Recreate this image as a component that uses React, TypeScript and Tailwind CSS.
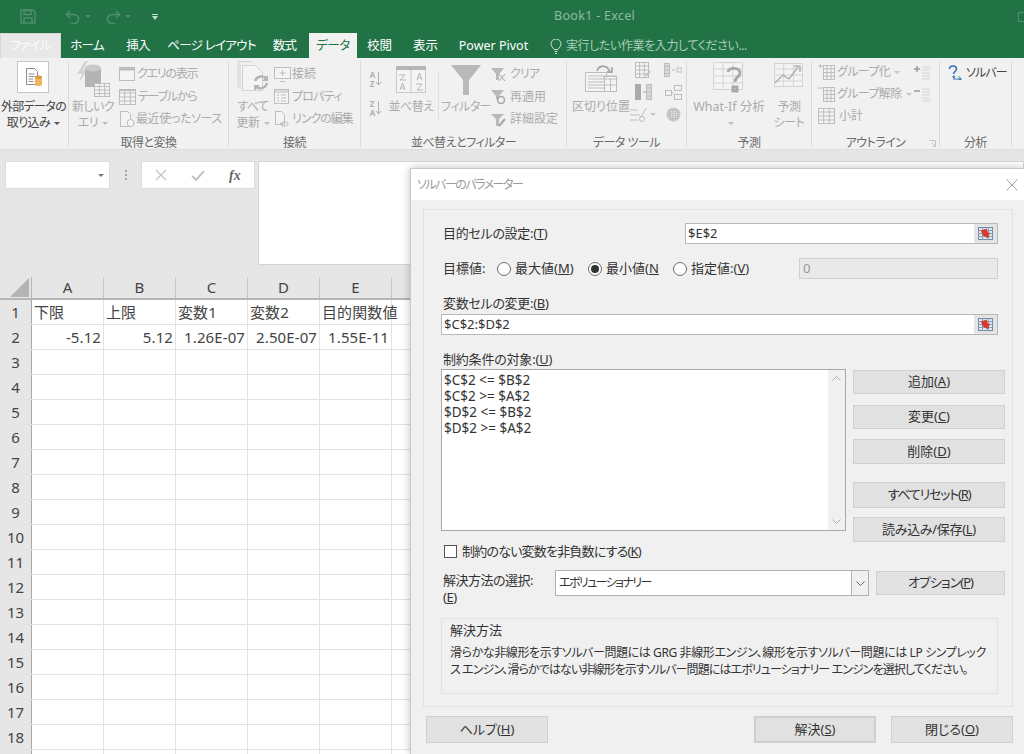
import type { ReactNode } from "react"

const G = "#bdbdbd"
const L = "#d3d3d3"

function Ico({ w, h, children, className }: { w: number; h: number; children: ReactNode; className?: string }) {
    return (
        <svg width={w} height={h} viewBox={`0 0 ${w} ${h}`} fill="none" className={className}>
            {children}
        </svg>
    )
}

function MiniTable({ x = 0, y = 0, w = 16, h = 14, c = G }: { x?: number; y?: number; w?: number; h?: number; c?: string }) {
    const cols = [w / 3, (2 * w) / 3]
    const rows = [h / 4, h / 2, (3 * h) / 4]
    return (
        <g>
            <rect x={x + 0.5} y={y + 0.5} width={w - 1} height={h - 1} fill="#f4f4f4" stroke={c} />
            {cols.map((v) => (
                <path key={v} d={`M${x + v} ${y}v${h}`} stroke={c} />
            ))}
            {rows.map((v) => (
                <path key={v} d={`M${x} ${y + v}h${w}`} stroke={c} />
            ))}
        </g>
    )
}

function Caret({ color = "#9a9a9a" }: { color?: string }) {
    return (
        <svg width="6" height="3" viewBox="0 0 6 3" className="inline-block ml-[4px] align-middle">
            <path d="M0 0h6L3 3z" fill={color} />
        </svg>
    )
}

function Group({ w, label, children, launcher }: { w: number; label: string; children: ReactNode; launcher?: boolean }) {
    return (
        <div className="h-[86px] border-r border-[#dadada] shrink-0 flex flex-col" style={{ width: w }}>
            <div className="h-[73px] shrink-0 flex">{children}</div>
            <div className="h-[15px] shrink-0 mt-[1px] leading-[15px] text-center text-[12px] tracking-[-0.5px] text-[#6a6a6a] relative">
                {label}
                {launcher && (
                    <svg width="7" height="7" viewBox="0 0 7 7" className="absolute right-[3px] top-[5px]">
                        <path d="M.5.5h6v6M3 3l3 3M4 6.500h2.500V4" stroke="#c4c4c4" fill="none" />
                    </svg>
                )}
            </div>
        </div>
    )
}

function Big({ w, ml = 0, icon, lines, dark }: { w: number; ml?: number; icon: ReactNode; lines: ReactNode[]; dark?: boolean }) {
    return (
        <div className="flex flex-col items-center shrink-0" style={{ width: w, marginLeft: ml }}>
            <div className="h-[38px] flex items-start justify-center w-full">{icon}</div>
            {lines.map((t, i) => (
                <div key={i} className={`h-[16px] leading-[16px] text-[12px] tracking-[-0.5px] whitespace-nowrap ${dark ? "text-[#444444]" : "text-[#ababab]"}`}>
                    {t}
                </div>
            ))}
        </div>
    )
}

function Small({ icon, text, h = 22.5, gap = 2, tr = 0 }: { icon: ReactNode; text: ReactNode; h?: number; gap?: number; tr?: number }) {
    return (
        <div className="flex items-center text-[12px] text-[#ababab] whitespace-nowrap" style={{ height: h, gap }}>
            {icon}
            <span style={{ letterSpacing: tr }}>{text}</span>
        </div>
    )
}

function RefBtn() {
    return (
        <div className="w-[23px] h-full bg-[#e4e4e4] flex items-center justify-center shrink-0">
            <svg width="15" height="13" viewBox="0 0 15 13">
                <rect x="0.5" y="0.5" width="14" height="12" fill="#dfe8f0" stroke="#6f8aa6" />
                <path d="M0 3.500h15M0 6.500h15M0 9.500h15M4.500 0v13M10.500 0v13" stroke="#86a0b8" />
                <path d="M4 2h6v5h2l-4 4.500L4 7z" fill="#d83b2b" transform="rotate(-20 8 6)" />
            </svg>
        </div>
    )
}

function Radio({ on }: { on?: boolean }) {
    return (
        <span className="w-[14px] h-[14px] rounded-full border border-[#6a6a6a] bg-white flex items-center justify-center shrink-0">
            {on && <span className="w-[8px] h-[8px] rounded-full bg-[#333333]" />}
        </span>
    )
}

function Btn({ children, className }: { children: ReactNode; className?: string }) {
    return (
        <div className={`flex items-center justify-center bg-[#e1e1e1] border border-[#cfcfcf] text-[13px] text-[#333333] shrink-0 ${className ?? ""}`}>
            {children}
        </div>
    )
}

const rows = Array.from({ length: 19 }, (_, i) => i + 1)
const cols = ["A", "B", "C", "D", "E", "F", "G", "H", "I", "J", "K", "L", "M", "N"]
const visibleCols = ["A", "B", "C", "D", "E"]
const cells: Record<string, { t: string; right?: boolean }> = {
    A1: { t: "下限" },
    B1: { t: "上限" },
    C1: { t: "変数1" },
    D1: { t: "変数2" },
    E1: { t: "目的関数値" },
    A2: { t: "-5.12", right: true },
    B2: { t: "5.12", right: true },
    C2: { t: "1.26E-07", right: true },
    D2: { t: "2.50E-07", right: true },
    E2: { t: "1.55E-11", right: true },
}

const tabs = [
    { t: "ホーム", w: 52 },
    { t: "挿入", w: 50 },
    { t: "ページ レイアウト", w: 97 },
    { t: "数式", w: 49 },
]

export default function App() {
    return (
        <div
            className="relative w-[1024px] h-[754px] overflow-hidden bg-[#e6e6e6] [font-feature-settings:'palt']"
            style={{ fontFamily: '"Noto Sans","Noto Sans CJK JP",sans-serif' }}
        >
            {/* title bar */}
            <div className="h-[33px] bg-[#217346] flex items-center">
                <svg width="16" height="15" viewBox="0 0 16 15" className="ml-[20px]">
                    <path d="M1 1h12l2 2v11H1z" fill="none" stroke="#4f8f6b" strokeWidth="1.500" />
                    <path d="M4 1.500h7v4H4zM4 14v-5h8v5" fill="none" stroke="#4f8f6b" strokeWidth="1.500" />
                </svg>
                <svg width="16" height="14" viewBox="0 0 16 14" className="ml-[29px]">
                    <path d="M5 1 1.500 4.500 5 8M2 4.500h7a4.500 4.500 0 0 1 0 9H6" fill="none" stroke="#4f8f6b" strokeWidth="1.700" />
                </svg>
                <Caret color="#4f8f6b" />
                <svg width="16" height="14" viewBox="0 0 16 14" className="ml-[14px]">
                    <path d="M11 1l3.500 3.500L11 8M14 4.500H7a4.500 4.500 0 0 0 0 9h3" fill="none" stroke="#4f8f6b" strokeWidth="1.700" />
                </svg>
                <Caret color="#4f8f6b" />
                <svg width="6" height="6" viewBox="0 0 6 6" className="ml-[21px]">
                    <path d="M0 0h6v1H0zM0 2h6L3 6z" fill="#c9dcd1" />
                </svg>
                <span className="ml-[396px] text-[12.5px] text-[#8fbba3] tracking-[0.3px]">Book1 - Excel</span>
                <span className="ml-auto mr-[-6px] w-[12px] h-[10px] border border-[#4f8f6b]" />
            </div>

            {/* tabs */}
            <div className="h-[25px] bg-[#217346] flex text-[12.5px] text-white pt-[1px]">
                <div className="w-[61px] mt-[-1px] bg-[#e8e8e8] border-t border-l border-r border-[#d6d6d6] flex items-center justify-center text-[#fbfbfb] tracking-[-0.5px]">
                    ファイル
                </div>
                {tabs.map((t) => (
                    <div key={t.t} className="flex items-center justify-center tracking-[-0.7px]" style={{ width: t.w }}>
                        {t.t}
                    </div>
                ))}
                <div className="w-[48px] mt-[-1px] pt-[1px] bg-[#f1f1f1] flex items-center justify-center text-[#217346] tracking-[-0.4px]">データ</div>
                <div className="w-[45px] flex items-center justify-center">校閲</div>
                <div className="w-[47px] flex items-center justify-center">表示</div>
                <div className="w-[89px] flex items-center justify-center">Power Pivot</div>
                <div className="ml-[12px] flex items-center gap-[4px] text-[12px] tracking-[-0.4px] text-[#a9cdb8]">
                    <svg width="12" height="15" viewBox="0 0 12 15" fill="none" stroke="#c9dcd1">
                        <path d="M4 10.500C3 8.500 1 7.500 1 5a5 5 0 0 1 10 0c0 2.500-2 3.500-3 5.500zM4.500 12.500h3M5 14.500h2" />
                    </svg>
                    <span>実行したい作業を入力してください...</span>
                </div>
            </div>

            {/* ribbon */}
            <div className="h-[92px] bg-[#f1f1f1] border-b border-[#dcdcdc] pt-[3px] flex">
                <Group w={69} label="">
                    <div className="w-full flex flex-col items-center">
                        <div className="w-[32px] h-[32px] bg-white border border-[#c6c6c6] flex items-center justify-center ml-[-2px]">
                            <Ico w={17} h={18}>
                                <path d="M1.500.500h8l3 3v13h-11z" fill="#fff" stroke="#8c8c8c" />
                                <path d="M3.500 6h6M3.500 8.500h6M3.500 11h5M3.500 13.500h5" stroke="#8c8c8c" />
                                <rect x="10" y="8" width="7" height="10" rx="2" fill="#f0b45e" />
                                <ellipse cx="13.500" cy="9" rx="3.500" ry="1.500" fill="#d99a3c" />
                            </Ico>
                        </div>
                        <div className="mt-[6px] ml-[-1px] h-[16px] leading-[16px] text-[12px] tracking-[-0.7px] text-[#444444] whitespace-nowrap">外部データの</div>
                        <div className="ml-[-1px] h-[16px] leading-[16px] text-[12px] tracking-[-0.5px] text-[#444444] whitespace-nowrap">
                            取り込み
                            <Caret color="#555555" />
                        </div>
                    </div>
                </Group>
                <Group w={160} label="取得と変換">
                    <Big
                        w={48}
                        icon={
                            <Ico w={34} h={37}>
                                <path d="M9 0 1 13h5l-3 8 9-12H7l5-9z" fill={L} />
                                <path d="M9 8c0-5 16-5 16 0v18H9z" fill="#b3b3b3" />
                                <ellipse cx="17" cy="7" rx="8" ry="3.500" fill="#c9c9c9" />
                                <MiniTable x={18} y={22} w={16} h={14} />
                            </Ico>
                        }
                        lines={["新しいク", <>エリ<Caret color="#bdbdbd" /></>]}
                    />
                    <div className="ml-[2px] pt-[2px]">
                        <Small
                            icon={<Ico w={16} h={14}><rect x=".5" y=".5" width="15" height="13" fill="#f4f4f4" stroke={G} /><path d="M0 0h16v3.500H0z" fill={G} /></Ico>}
                            text="クエリの表示"
                            tr={-1.2}
                        />
                        <Small
                            icon={<Ico w={17} h={16}><MiniTable w={17} h={16} /><path d="M0 0h17v2H0z" fill={G} /></Ico>}
                            text="テーブルから"
                            tr={-1.2}
                            gap={2}
                        />
                        <Small
                            icon={<Ico w={16} h={16}><path d="M1.500.500h7l3 3v12h-10z" fill="#f4f4f4" stroke={G} /><circle cx="11.500" cy="12" r="3.500" fill="#f4f4f4" stroke={G} /></Ico>}
                            text="最近使ったソース"
                            tr={-0.4}
                            gap={1}
                        />
                    </div>
                </Group>
                <Group w={132} label="接続">
                    <Big
                        w={48}
                        icon={
                            <Ico w={32} h={34}>
                                <path d="M1 .500h14M1 .500v26M3 2.500v26" stroke={L} />
                                <path d="M5.500 4.500h13l7 7v18h-20z" fill="#f4f4f4" stroke={L} />
                                <path d="M18 20a7 7 0 0 1 12-2M30 22a7 7 0 0 1-12 3" stroke="#b5b5b5" strokeWidth="2.500" />
                                <path d="M31 14v6h-6zM17 30v-6h6z" fill="#b5b5b5" />
                            </Ico>
                        }
                        lines={["すべて", <>更新<Caret color="#bdbdbd" /></>]}
                    />
                    <div className="ml-[-3px] pt-[2px]">
                        <Small
                            icon={<Ico w={17} h={15}><rect x=".5" y=".5" width="16" height="11" fill="#f4f4f4" stroke={G} /><path d="M8.500 3v6M5.500 6h6M6 14.500h5" stroke={G} /></Ico>}
                            text="接続"
                            gap={1}
                        />
                        <Small
                            icon={<Ico w={15} h={15}><rect x=".5" y=".5" width="14" height="14" fill="#f4f4f4" stroke={G} /><path d="M0 1h15v2H0zM3 6h2M7 6h5M3 9h2M7 9h5M3 12h2M7 12h5" stroke={G} /></Ico>}
                            text="プロパティ"
                            gap={3}
                            tr={-0.8}
                        />
                        <Small
                            icon={<Ico w={15} h={16}><path d="M1.500.500h6l3 3v10h-9z" fill="#f4f4f4" stroke={G} /><path d="M6 12.500h3M9 11h3a2 2 0 0 1 0 4H9a2 2 0 0 1 0-4z" stroke={G} /></Ico>}
                            text="リンクの編集"
                            gap={3}
                            tr={-1}
                        />
                    </div>
                </Group>
                <Group w={206} label="並べ替えとフィルター">
                    <div className="ml-[7px] w-[16px] flex flex-col items-center text-[8px] leading-[9px] font-bold text-[#b0b0b0]">
                        <div className="mt-[9px] flex items-center">
                            <span className="flex flex-col"><span>A</span><span>Z</span></span>
                            <Ico w={7} h={16}><path d="M3.500 1v13M1 11l2.500 3L6 11" stroke="#b0b0b0" /></Ico>
                        </div>
                        <div className="mt-[11px] flex items-center">
                            <span className="flex flex-col"><span>Z</span><span>A</span></span>
                            <Ico w={7} h={16}><path d="M3.500 1v13M1 11l2.500 3L6 11" stroke="#b0b0b0" /></Ico>
                        </div>
                    </div>
                    <Big
                        w={50}
                        ml={2}
                        icon={
                            <Ico w={30} h={27} className="mt-[5px]">
                                <rect x=".5" y=".5" width="29" height="26" fill="#f4f4f4" stroke="#c8c8c8" />
                                <path d="M0 0h30v4H0z" fill="#b5b5b5" />
                                <path d="M15 4v23" stroke="#c8c8c8" />
                                <path d="M3 9h6L4 14h6M4 24l2.500-7L9 24M5 22h3M21 14l2.500-7 2.500 7M22 12h3M20 18h6l-5 6h6" stroke="#b5b5b5" />
                            </Ico>
                        }
                        lines={["並べ替え"]}
                    />
                    <div className="ml-[2px] mt-[9px] w-px h-[52px] bg-[#e2e2e2]" />
                    <Big
                        w={54}
                        ml={0}
                        icon={
                            <Ico w={30} h={30} className="mt-[4px]">
                                <path d="M0 0h30L18 15v15h-6V15z" fill="#b9b9b9" />
                            </Ico>
                        }
                        lines={["フィルター"]}
                    />
                    <div className="ml-[-2px] pt-[2px]">
                        <Small
                            icon={<Ico w={15} h={15}><path d="M0 1h13L8 7v6H5V7z" fill="#b9b9b9" /><path d="M8 7l6 7M14 7l-6 7" stroke="#a5a5a5" /></Ico>}
                            text="クリア"
                            gap={4}
                            tr={-0.8}
                        />
                        <Small
                            icon={<Ico w={15} h={15}><path d="M0 1h13L8 7v3H5V7z" fill="#b9b9b9" /><circle cx="10" cy="11" r="3.500" stroke="#a5a5a5" strokeWidth="1.500" /></Ico>}
                            text="再適用"
                            gap={4}
                        />
                        <Small
                            icon={<Ico w={15} h={15}><path d="M0 2h13L8 7v7H5V7z" fill="#b9b9b9" /><path d="M8 14l6-7" stroke="#a5a5a5" strokeWidth="2" /></Ico>}
                            text="詳細設定"
                            gap={4}
                        />
                    </div>
                </Group>
                <Group w={120} label="データ ツール">
                    <Big
                        w={62}
                        ml={3}
                        icon={
                            <Ico w={32} h={29} className="mt-[3px]">
                                <path d="M.5 8.500h21v19H.5z" fill="#f4f4f4" stroke={G} />
                                <path d="M3 12h16M3 15h16M3 18h16M3 21h16M3 24h16" stroke={G} />
                                <rect x="19.500" y="12.500" width="12" height="15" fill="#f4f4f4" stroke={G} />
                                <path d="M19 12h13v3H19zM25.500 15v12M19 21h13" stroke={G} />
                                <path d="M12 7c2-6 10-7 13 1M22 8h5V3" stroke="#a9a9a9" strokeWidth="1.800" />
                            </Ico>
                        }
                        lines={[<span className="tracking-[0px]">区切り位置</span>]}
                    />
                    <div className="ml-[2px] mt-[-2px] grid grid-cols-[18px_18px] gap-x-[12px] grid-rows-[22px_22px_22px] items-center justify-items-center">
                        <Ico w={16} h={16}><MiniTable w={14} h={16} /><path d="M11 14l4-5" stroke={G} strokeWidth="2" /></Ico>
                        <Ico w={18} h={14}><MiniTable w={6} h={14} /><path d="M8 7h3M13 5h5v4h-5z" stroke={G} /></Ico>
                        <Ico w={17} h={16}><rect width="6" height="16" fill="#aaaaaa" /><path d="M8 8h3" stroke="#aaaaaa" /><MiniTable x={11} y={0} w={6} h={16} /></Ico>
                        <Ico w={17} h={15}><rect x=".5" y="5.500" width="6" height="5" stroke={G} /><rect x="9.500" y=".5" width="7" height="5" stroke={G} /><rect x="9.500" y="9.500" width="7" height="5" stroke={G} /><path d="M7 8h2" stroke={G} /></Ico>
                        <div className="flex items-center">
                            <Ico w={16} h={15}><path d="M0 3h8M0 8h8M0 13h8M8 7l3 3 5-9" stroke={G} /><circle cx="12" cy="12" r="2.500" stroke={G} /></Ico>
                            <Caret color="#c6c6c6" />
                        </div>
                        <Ico w={15} h={15}><ellipse cx="7.500" cy="7.500" rx="7" ry="7" fill="#c8c8c8" /><MiniTable x={4} y={3} w={8} h={9} /></Ico>
                    </div>
                </Group>
                <Group w={125} label="予測">
                    <Big
                        w={84}
                        icon={
                            <Ico w={32} h={32}>
                                <MiniTable y={1} w={30} h={28} c={L} />
                                <path d="M15 11c1-5 12-5 12 1 0 4-5 4-5 9M20 26h4v4h-4z" stroke="#a9a9a9" strokeWidth="3" fill="none" />
                            </Ico>
                        }
                        lines={[<span className="text-[12.5px] tracking-[0px]">What-If 分析</span>, <Caret color="#bdbdbd" />]}
                    />
                    <Big
                        w={36}
                        icon={
                            <Ico w={30} h={30}>
                                <MiniTable y={2} w={29} h={24} c={L} />
                                <path d="M1 22l8-8 6 4 9-12M20 5h6v6" stroke="#b0b0b0" strokeWidth="1.500" />
                            </Ico>
                        }
                        lines={["予測", "シート"]}
                    />
                </Group>
                <Group w={128} label="アウトライン" launcher>
                    <div className="pl-[6px] w-[100px]">
                        <Small h={22} tr={-0.6} icon={<Ico w={17} h={16}><path d="M0 2h5M2.500 0v4" stroke={G} /><MiniTable x={5} y={1} w={12} h={15} /></Ico>} text={<>グループ化<Caret color="#c6c6c6" /></>} />
                        <Small h={22} tr={-0.6} icon={<Ico w={17} h={16}><path d="M0 2h5" stroke={G} /><MiniTable x={5} y={1} w={12} h={15} /></Ico>} text={<>グループ解除<Caret color="#c6c6c6" /></>} />
                        <Small h={22} icon={<Ico w={17} h={16}><MiniTable w={17} h={16} /></Ico>} text={<span className="ml-[1px]">小計</span>} gap={3} />
                    </div>
                    <div className="ml-[2px] pt-[4px]">
                        <Ico w={16} h={15}><path d="M0 4h6M3 1v6" stroke="#999999" strokeWidth="1.500" /><path d="M8 2h8M8 5h8M8 8h8M8 11h8M8 14h8" stroke={L} /></Ico>
                        <Ico w={16} h={15} className="mt-[7px]"><path d="M0 4h6" stroke="#999999" strokeWidth="1.500" /><path d="M8 2h8M8 5h8M8 8h8M8 11h8M8 14h8" stroke={L} /></Ico>
                    </div>
                </Group>
                <Group w={72} label="分析">
                    <div className="pl-[8px] pt-[1px] h-[22px] flex items-center gap-[4px] text-[12px] tracking-[-0.9px] text-[#444444] whitespace-nowrap">
                        <Ico w={14} h={15}>
                            <path d="M1.500 4c0-4 7-4 7 0 0 2.500-3 2.500-3 5" stroke="#2f6fb5" strokeWidth="1.600" />
                            <path d="M5 11h1.500v1.500H5zM5 14h8M10.500 11.500l3 2.500-3 1" stroke="#2f6fb5" />
                        </Ico>
                        ソルバー
                    </div>
                </Group>
            </div>

            {/* formula bar */}
            <div className="h-[127px] pt-[11px] flex items-start">
                <div className="ml-[5px] w-[105px] h-[28px] bg-white border border-[#dcdcdc] flex items-center justify-end pr-[5px]">
                    <svg width="6" height="3" viewBox="0 0 6 3">
                        <path d="M0 0h6L3 3z" fill="#777777" />
                    </svg>
                </div>
                <div className="ml-[14px] h-[28px] w-[3px] flex flex-col justify-center gap-[2px] items-center">
                    <span className="w-[2px] h-[2px] bg-[#a6a6a6]" />
                    <span className="w-[2px] h-[2px] bg-[#a6a6a6]" />
                    <span className="w-[2px] h-[2px] bg-[#a6a6a6]" />
                </div>
                <div className="ml-[14px] w-[114px] h-[28px] bg-white border border-[#dcdcdc] flex items-center">
                    <svg width="12" height="12" viewBox="0 0 12 12" className="ml-[13px]">
                        <path d="M1 1l10 10M11 1 1 11" stroke="#c4c4c4" strokeWidth="1.300" />
                    </svg>
                    <svg width="14" height="11" viewBox="0 0 14 11" className="ml-[24px]">
                        <path d="M1 6l4 4 8-9" stroke="#c4c4c4" strokeWidth="2" fill="none" />
                    </svg>
                    <span className="ml-[24px] text-[14px] italic font-bold text-[#666666] [font-family:'Liberation_Serif',serif]">fx</span>
                </div>
                <div className="ml-[3px] flex-1 h-[104px] bg-white border border-[#d4d4d4]" />
            </div>

            {/* sheet */}
            <div className="flex h-[23px] border-b-2 border-[#b5b5b5]">
                <div className="w-[32px] shrink-0 border-r border-[#b5b5b5] flex items-end justify-end pr-[2px] pb-[1px]">
                    <svg width="19" height="19" viewBox="0 0 19 19">
                        <path d="M19 0v19H0z" fill="#b4b4b4" />
                    </svg>
                </div>
                {cols.map((c) => (
                    <div key={c} className="w-[72px] shrink-0 border-r border-[#c8c8c8] flex items-center justify-center text-[15px] text-[#444444]">
                        {visibleCols.includes(c) ? c : ""}
                    </div>
                ))}
            </div>
            <div className="bg-white">
                {rows.map((r) => (
                    <div key={r} className="flex h-[25px] border-b border-[#e2e2e2]">
                        <div className="w-[32px] shrink-0 bg-[#e6e6e6] border-r border-[#a8a8a8] flex items-center justify-center text-[15px] text-[#444444]">
                            {r < 19 ? r : ""}
                        </div>
                        {cols.map((c) => {
                            const cell = cells[`${c}${r}`]
                            return (
                                <div
                                    key={c}
                                    className={`w-[72px] shrink-0 border-r border-[#e2e2e2] flex items-center px-[2px] text-[15px] tracking-[0.1px] text-[#444444] whitespace-nowrap ${cell?.right ? "justify-end" : ""}`}
                                >
                                    {cell?.t}
                                </div>
                            )
                        })}
                    </div>
                ))}
            </div>

            {/* solver dialog */}
            <div className="absolute left-[410px] top-[168px] w-[614px] h-[586px] bg-[#f0f0f0] border-l border-t border-[#c8c8c8] shadow-[0_0_8px_rgba(0,0,0,0.25)]">
                <div className="h-[31px] bg-white flex items-center justify-between pl-[6px] pr-[6px] text-[12px] tracking-[-1.5px] text-[#9a9a9a]">
                    <span>ソルバーのパラメーター</span>
                    <svg width="12" height="12" viewBox="0 0 12 12">
                        <path d="M.5.5l11 11M11.500.5l-11 11" stroke="#a0a0a0" />
                    </svg>
                </div>
                <div className="ml-[12px] mt-[9px] w-[590px] h-[498px] border border-[#e2e2e2] px-[17px] text-[13px] text-[#333333]">
                    <div className="mt-[13px] h-[21px] flex items-center w-[557px]">
                        <span className="w-[244px] pl-[2px] shrink-0 tracking-[-0.3px]">目的セルの設定:(<u>T</u>)</span>
                        <div className="flex-1 h-full bg-white border border-[#b8b8b8] flex items-center pl-[2px]">
                            <span className="flex-1">$E$2</span>
                            <RefBtn />
                        </div>
                    </div>
                    <div className="mt-[14px] h-[21px] flex items-center w-[557px]">
                        <span className="w-[56px] pl-[2px] shrink-0">目標値:</span>
                        <Radio />
                        <span className="ml-[4px] w-[73px] shrink-0">最大値(<u>M</u>)</span>
                        <Radio on />
                        <span className="ml-[4px] w-[67px] shrink-0">最小値(<u>N</u></span>
                        <Radio />
                        <span className="ml-[4px] w-[108px] shrink-0">指定値:(<u>V</u>)</span>
                        <div className="flex-1 h-full bg-[#e9e9e9] border border-[#cfcfcf] flex items-center pl-[3px] text-[#9a9a9a]">0</div>
                    </div>
                    <div className="mt-[17px] h-[15px] leading-[15px] pl-[2px] tracking-[-0.3px]">変数セルの変更:(<u>B</u>)</div>
                    <div className="mt-[3px] h-[21px] w-[557px] bg-white border border-[#b8b8b8] flex items-center pl-[2px]">
                        <span className="flex-1">$C$2:$D$2</span>
                        <RefBtn />
                    </div>
                    <div className="mt-[17px] h-[15px] leading-[15px] pl-[2px] tracking-[-0.2px]">制約条件の対象:(<u>U</u>)</div>
                    <div className="mt-[2px] flex w-[564px] gap-[7px]">
                        <div className="w-[405px] shrink-0">
                            <div className="h-[162px] bg-white border border-[#a8a8a8] flex">
                                <div className="flex-1 pl-[2px] pt-[2px] leading-[16px] text-[13.5px]">
                                    <div>$C$2 &lt;= $B$2</div>
                                    <div>$C$2 &gt;= $A$2</div>
                                    <div>$D$2 &lt;= $B$2</div>
                                    <div>$D$2 &gt;= $A$2</div>
                                </div>
                                <div className="w-[17px] bg-[#f0f0f0] flex flex-col justify-between items-center py-[6px]">
                                    <svg width="9" height="5" viewBox="0 0 9 5"><path d="M.5 4.500l4-4 4 4" stroke="#b0b0b0" fill="none" /></svg>
                                    <svg width="9" height="5" viewBox="0 0 9 5"><path d="M.5.5l4 4 4-4" stroke="#b0b0b0" fill="none" /></svg>
                                </div>
                            </div>
                            <div className="mt-[13px] pl-[3px] h-[15px] flex items-center gap-[5px]">
                                <span className="w-[13px] h-[13px] bg-white border border-[#555555]" />
                                <span className="tracking-[-0.8px]">制約のない変数を非負数にする(<u>K</u>)</span>
                            </div>
                        </div>
                        <div className="w-[152px] shrink-0">
                            <Btn className="mt-[1px] h-[24px]">追加(<u>A</u>)</Btn>
                            <Btn className="mt-[11px] h-[24px]">変更(<u>C</u>)</Btn>
                            <Btn className="mt-[10px] h-[25px]">削除(<u>D</u>)</Btn>
                            <Btn className="mt-[18px] h-[26px] tracking-[-1.2px]">すべてリセット(<u>R</u>)</Btn>
                            <Btn className="mt-[9px] h-[25px] tracking-[-0.3px]">読み込み/保存(<u>L</u>)</Btn>
                        </div>
                    </div>
                    <div className="mt-[11px] flex h-[26px] w-[564px]">
                        <div className="w-[114px] shrink-0 pl-[2px] pt-[2px] leading-[17px] tracking-[-0.5px]">
                            解決方法の選択:
                            <br />
                            (<u>E</u>)
                        </div>
                        <div className="w-[314px] h-full shrink-0 bg-white border border-[#b0b0b0] flex items-center pl-[3px] text-[12px]">
                            <span className="flex-1 tracking-[-1.6px]">エボリューショナリー</span>
                            <div className="w-[17px] h-full bg-[#f0f0f0] border-l border-[#b0b0b0] flex items-center justify-center">
                                <svg width="9" height="5" viewBox="0 0 9 5"><path d="M.5.5l4 4 4-4" stroke="#666666" fill="none" /></svg>
                            </div>
                        </div>
                        <Btn className="ml-[7px] w-[129px] h-[24px] mt-[1px] tracking-[-1px]">オプション(<u>P</u>)</Btn>
                    </div>
                    <div className="mt-[22px] w-[557px] h-[76px] border border-[#e2e2e2] pl-[8px] pt-[3px] text-[12px]">
                        <div className="h-[17px] leading-[17px] text-[13px]">解決方法</div>
                        <div className="mt-[5px] leading-[17px] whitespace-nowrap">
                            <div className="tracking-[-0.4px]">滑らかな非線形を示すソルバー問題には GRG 非線形エンジン、線形を示すソルバー問題には LP シンプレック</div>
                            <div className="tracking-[-0.9px]">ス エンジン、滑らかではない非線形を示すソルバー問題にはエボリューショナリー エンジンを選択してください。</div>
                        </div>
                    </div>
                </div>
                <div className="mt-[9px] ml-[15px] flex">
                    <Btn className="w-[122px] h-[27px]">ヘルプ(<u>H</u>)</Btn>
                    <Btn className="ml-[206px] w-[122px] h-[27px] border-2 border-[#2d8fdc]">解決(<u>S</u>)</Btn>
                    <Btn className="ml-[15px] w-[122px] h-[27px]">閉じる(<u>O</u>)</Btn>
                </div>
            </div>
        </div>
    )
}
